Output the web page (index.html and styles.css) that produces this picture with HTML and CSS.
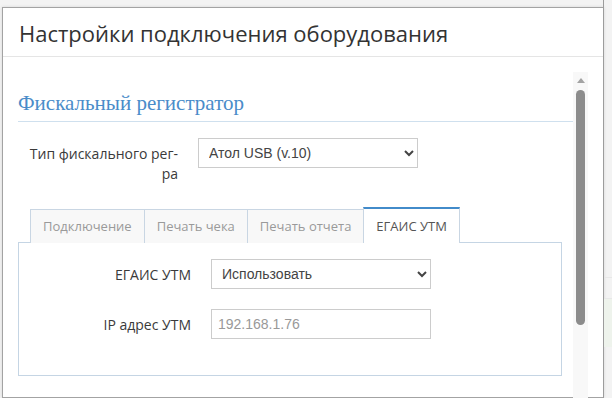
FILE: index.html
```html
<!DOCTYPE html>
<html lang="ru">
<head>
  <meta charset="UTF-8">
  <title>Настройки подключения оборудования</title>
  <link rel="stylesheet" href="styles.css">
</head>
<body>
  <div class="modal">
    <div class="modal-header">
      <h4>Настройки подключения оборудования</h4>
    </div>

    <div class="modal-body">
      <div class="content">
        <h3 class="section-title">Фискальный регистратор</h3>

        <div class="form-row">
          <label for="fiscalType">Тип фискального рег-ра</label>
          <select id="fiscalType">
            <option>Атол USB (v.10)</option>
          </select>
        </div>

        <ul class="tabs">
          <li>Подключение</li>
          <li>Печать чека</li>
          <li>Печать отчета</li>
          <li class="active">ЕГАИС УТМ</li>
        </ul>

        <div class="tab-panel">
          <div class="form-row">
            <label for="egais">ЕГАИС УТМ</label>
            <select id="egais">
              <option>Использовать</option>
            </select>
          </div>
          <div class="form-row">
            <label for="utmIp">IP адрес УТМ</label>
            <input type="text" id="utmIp" value="192.168.1.76">
          </div>
        </div>
      </div>

      <div class="scrollbar">
        <span class="scroll-arrow"></span>
        <span class="scroll-thumb"></span>
      </div>
    </div>
  </div>

  <!-- page behind the dialog -->
  <div class="backdrop">
    <div class="backdrop-row"></div>
    <div class="backdrop-row green"></div>
  </div>
</body>
</html>
```

FILE: styles.css
```css
body {
  margin: 0;
  height: 398px;
  overflow: hidden;
  display: flex;
  background: #f3f3f3;
  font-family: 'Open Sans', Arial, sans-serif;
  color: #333;
}

.modal {
  width: 602px;
  flex-shrink: 0;
  margin: 7px 0 0 2px;
  background: #fff;
  border: 1px solid #a3a3a3;
  box-sizing: border-box;
  box-shadow: 0 0 3px rgba(0, 0, 0, 0.12);
}

.modal-header {
  padding: 13px 16px 11px;
  border-bottom: 1px solid #e5e5e5;
}

.modal-header h4 {
  margin: 0;
  font-size: 22px;
  font-weight: 400;
  line-height: 24px;
  color: #333;
}

.modal-body {
  display: flex;
}

.content {
  flex: 1;
  padding-left: 15px;
}

.section-title {
  margin: 35px 0 0;
  padding-bottom: 6px;
  border-bottom: 1px solid #cfe0ee;
  font-family: 'Liberation Serif', 'Times New Roman', serif;
  font-size: 21px;
  font-weight: 400;
  line-height: 23px;
  color: #4a8cc9;
}

.form-row {
  display: flex;
  align-items: flex-start;
  gap: 20px;
}

.content > .form-row {
  margin-top: 16px;
}

.form-row label {
  width: 160px;
  flex-shrink: 0;
  padding-top: 6px;
  text-align: right;
  font-size: 14px;
  line-height: 20px;
  color: #3a3a3a;
}

select, input {
  width: 220px;
  height: 30px;
  box-sizing: border-box;
  border: 1px solid #ccc;
  border-radius: 0;
  background: #fff;
  font-family: 'Liberation Sans', Arial, sans-serif;
  font-size: 14px;
  color: #444;
}

select {
  padding: 0 6px;
}

input {
  padding: 0 6px;
  color: #999;
}

.tabs {
  display: flex;
  align-items: flex-end;
  list-style: none;
  margin: 23px 0 -1px 13px;
  padding: 0;
}

.tabs li {
  margin-left: -1px;
  padding: 6px 12px 7px;
  border: 1px solid #c9d6e3;
  border-bottom: none;
  background: #f8f8f8;
  font-size: 13px;
  line-height: 20px;
  color: #9a9a9a;
}

.tabs li.active {
  position: relative;
  z-index: 1;
  padding: 7px 12px;
  border-top: 2px solid #428bca;
  background: #fff;
  color: #555;
}

.tab-panel {
  margin-right: 11px;
  padding: 16px 12px 36px;
  border: 1px solid #c5d5e4;
}

.tab-panel .form-row + .form-row {
  margin-top: 20px;
}

.scrollbar {
  width: 15px;
  margin: 15px 15px 0 0;
  height: 330px;
  display: flex;
  flex-direction: column;
  align-items: center;
  background: #f8f8f8;
}

.scroll-arrow {
  margin-top: 6px;
  width: 0;
  height: 0;
  border-left: 4px solid transparent;
  border-right: 4px solid transparent;
  border-bottom: 5px solid #a3a3a3;
}

.scroll-thumb {
  margin-top: 7px;
  width: 9px;
  height: 235px;
  border-radius: 5px;
  background: #8c8c8c;
}

.backdrop {
  flex: 1;
  padding-top: 277px;
  border-left: 1px solid #9c9c9c;
  margin-left: -1px;
}

.backdrop-row {
  height: 20px;
  border-top: 1px solid #e8e8e8;
}

.backdrop-row.green {
  height: 48px;
  background: #eef3ec;
}
```
